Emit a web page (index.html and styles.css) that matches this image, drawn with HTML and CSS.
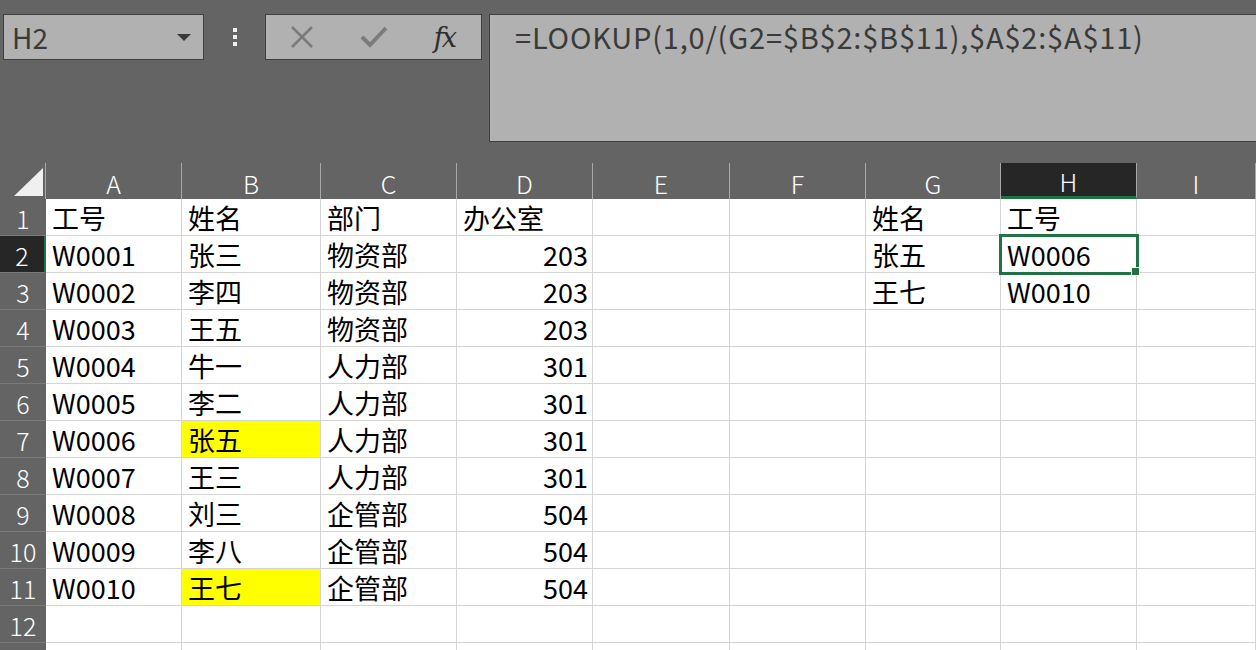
FILE: index.html
```html
<!DOCTYPE html>
<html>
<head>
<meta charset="utf-8">
<title>LOOKUP</title>
<link rel="stylesheet" href="styles.css">
</head>
<body>
<div class="toolbar">
  <div class="namebox">
    <span class="name">H2</span>
    <span class="arrow"></span>
  </div>
  <div class="grip"><i></i><i></i><i></i></div>
  <div class="buttons">
    <svg class="btn" width="26" height="26" viewBox="0 0 26 26"><path d="M3 3 L23 23 M23 3 L3 23" stroke="#7b7b7b" stroke-width="2.6" fill="none"/></svg>
    <svg class="btn" width="30" height="26" viewBox="0 0 30 26"><path d="M3 13 L11 21 L27 4" stroke="#7b7b7b" stroke-width="4" fill="none"/></svg>
    <span class="fx">fx</span>
  </div>
  <div class="formula">=LOOKUP(1,0/(G2=$B$2:$B$11),$A$2:$A$11)</div>
</div>

<div class="sheet">
  <div class="corner"><span class="tri"></span></div>
  <div class="colhead">A</div><div class="colhead">B</div><div class="colhead">C</div><div class="colhead">D</div><div class="colhead">E</div><div class="colhead">F</div><div class="colhead">G</div><div class="colhead sel">H</div><div class="colhead">I</div>

  <div class="rowhead">1</div><div class="cell">工号</div><div class="cell">姓名</div><div class="cell">部门</div><div class="cell">办公室</div><div class="cell"></div><div class="cell"></div><div class="cell">姓名</div><div class="cell">工号</div><div class="cell"></div>
  <div class="rowhead sel">2</div><div class="cell">W0001</div><div class="cell">张三</div><div class="cell">物资部</div><div class="cell num">203</div><div class="cell"></div><div class="cell"></div><div class="cell">张五</div><div class="cell active">W0006</div><div class="cell"></div>
  <div class="rowhead">3</div><div class="cell">W0002</div><div class="cell">李四</div><div class="cell">物资部</div><div class="cell num">203</div><div class="cell"></div><div class="cell"></div><div class="cell">王七</div><div class="cell">W0010</div><div class="cell"></div>
  <div class="rowhead">4</div><div class="cell">W0003</div><div class="cell">王五</div><div class="cell">物资部</div><div class="cell num">203</div><div class="cell"></div><div class="cell"></div><div class="cell"></div><div class="cell"></div><div class="cell"></div>
  <div class="rowhead">5</div><div class="cell">W0004</div><div class="cell">牛一</div><div class="cell">人力部</div><div class="cell num">301</div><div class="cell"></div><div class="cell"></div><div class="cell"></div><div class="cell"></div><div class="cell"></div>
  <div class="rowhead">6</div><div class="cell">W0005</div><div class="cell">李二</div><div class="cell">人力部</div><div class="cell num">301</div><div class="cell"></div><div class="cell"></div><div class="cell"></div><div class="cell"></div><div class="cell"></div>
  <div class="rowhead">7</div><div class="cell">W0006</div><div class="cell yellow">张五</div><div class="cell">人力部</div><div class="cell num">301</div><div class="cell"></div><div class="cell"></div><div class="cell"></div><div class="cell"></div><div class="cell"></div>
  <div class="rowhead">8</div><div class="cell">W0007</div><div class="cell">王三</div><div class="cell">人力部</div><div class="cell num">301</div><div class="cell"></div><div class="cell"></div><div class="cell"></div><div class="cell"></div><div class="cell"></div>
  <div class="rowhead">9</div><div class="cell">W0008</div><div class="cell">刘三</div><div class="cell">企管部</div><div class="cell num">504</div><div class="cell"></div><div class="cell"></div><div class="cell"></div><div class="cell"></div><div class="cell"></div>
  <div class="rowhead">10</div><div class="cell">W0009</div><div class="cell">李八</div><div class="cell">企管部</div><div class="cell num">504</div><div class="cell"></div><div class="cell"></div><div class="cell"></div><div class="cell"></div><div class="cell"></div>
  <div class="rowhead">11</div><div class="cell">W0010</div><div class="cell yellow">王七</div><div class="cell">企管部</div><div class="cell num">504</div><div class="cell"></div><div class="cell"></div><div class="cell"></div><div class="cell"></div><div class="cell"></div>
  <div class="rowhead">12</div><div class="cell"></div><div class="cell"></div><div class="cell"></div><div class="cell"></div><div class="cell"></div><div class="cell"></div><div class="cell"></div><div class="cell"></div><div class="cell"></div>
  <div class="rowhead"></div><div class="cell"></div><div class="cell"></div><div class="cell"></div><div class="cell"></div><div class="cell"></div><div class="cell"></div><div class="cell"></div><div class="cell"></div><div class="cell"></div>
</div>
</body>
</html>
```

FILE: styles.css
```css
body {
    margin: 0;
    background: #646464;
    font-family: "Noto Sans CJK SC", "Noto Sans", sans-serif;
    overflow: hidden;
}

.toolbar {
    display: flex;
    align-items: flex-start;
    height: 163px;
    padding: 14px 0 0 3px;
    box-sizing: border-box;
}

.namebox {
    width: 201px;
    height: 46px;
    box-sizing: border-box;
    background: #b1b1b1;
    border: 1px solid #3f3f3f;
    display: flex;
    align-items: center;
    justify-content: space-between;
    padding: 0 12px 0 8px;
}

.name {
    font-size: 28px;
    color: #3a3a3a;
    line-height: 1;
}

.arrow {
    width: 0;
    height: 0;
    border-left: 7px solid transparent;
    border-right: 7px solid transparent;
    border-top: 7px solid #3a3a3a;
}

.grip {
    width: 61px;
    height: 46px;
    display: flex;
    flex-direction: column;
    align-items: center;
    justify-content: center;
    gap: 3px;
}

.grip i {
    display: block;
    width: 4px;
    height: 4px;
    background: #f0f0f0;
}

.buttons {
    width: 217px;
    height: 46px;
    box-sizing: border-box;
    background: #b1b1b1;
    border: 1px solid #3f3f3f;
    display: flex;
    align-items: center;
    padding: 0 26px 0 23px;
    justify-content: space-between;
}

.fx {
    font-family: "DejaVu Serif", "Liberation Serif", serif;
    font-style: italic;
    font-size: 27px;
    color: #2e2e2e;
    letter-spacing: -2px;
}

.formula {
    flex: 1;
    margin-left: 7px;
    height: 128px;
    box-sizing: border-box;
    background: #b1b1b1;
    border: 1px solid #3f3f3f;
    border-right: none;
    padding: 2px 0 0 25px;
    font-size: 29px;
    letter-spacing: 0.8px;
    color: #3a3a3a;
    line-height: 38px;
}

.sheet {
    display: grid;
    grid-template-columns: 46px 136px 139px 136px 136px 137px 136px 135px 136px 1fr;
    grid-template-rows: 36px;
    grid-auto-rows: 37px;
    background: #ffffff;
}

.corner {
    background: #646464;
    position: relative;
    border-right: 1px solid #a8a8a8;
}

.tri {
    position: absolute;
    left: 14px;
    top: 5px;
    width: 0;
    height: 0;
    border-left: 29px solid transparent;
    border-bottom: 28px solid #f0f0f0;
}

.colhead {
    background: #646464;
    color: #ffffff;
    font-size: 25px;
    font-weight: 300;
    text-align: center;
    line-height: 40px;
    border-right: 1px solid #a8a8a8;
    box-sizing: border-box;
}

.colhead.sel {
    background: #262626;
    border-bottom: 3px solid #217346;
    line-height: 37px;
}

.rowhead {
    background: #646464;
    color: #ffffff;
    font-size: 25px;
    font-weight: 300;
    text-align: center;
    line-height: 38px;
    border-bottom: 1px solid #7a7a7a;
    box-sizing: border-box;
}

.rowhead.sel {
    background: #262626;
    border-right: 2px solid #217346;
}

.cell {
    box-sizing: border-box;
    border-right: 1px solid #d4d4d4;
    border-bottom: 1px solid #d4d4d4;
    font-size: 27px;
    color: #000000;
    line-height: 38px;
    padding-left: 6px;
    white-space: nowrap;
}

.cell.num {
    text-align: right;
    padding-right: 4px;
}

.cell.yellow {
    background: #ffff00;
}

.cell.active {
    position: relative;
}

.cell.active::after {
    content: "";
    position: absolute;
    left: -2px;
    top: -2px;
    right: -3px;
    bottom: -3px;
    border: 3px solid #217346;
}

.cell.active::before {
    content: "";
    position: absolute;
    right: -4px;
    bottom: -4px;
    width: 7px;
    height: 7px;
    background: #217346;
    border: 1px solid #ffffff;
    z-index: 2;
}
```
